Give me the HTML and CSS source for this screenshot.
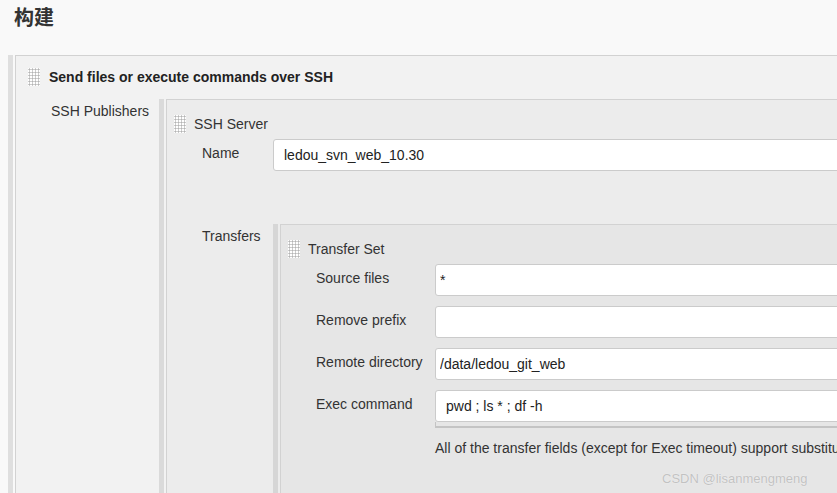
FILE: index.html
```html
<!DOCTYPE html>
<html>
<head>
    <meta charset="utf-8">
    <title>构建</title>
    <link rel="stylesheet" href="styles.css">
</head>
<body>
    <div class="title">构建</div>

    <div class="block lvl1">
        <div class="bar"></div>
        <div class="box">
            <div class="head strong"><span class="grip"></span>Send files or execute commands over SSH</div>
            <div class="row">
                <div class="label">SSH Publishers</div>

                <div class="block lvl2">
                    <div class="bar"></div>
                    <div class="box">
                        <div class="head"><span class="grip"></span>SSH Server</div>
                        <div class="row field">
                            <div class="label">Name</div>
                            <input class="text pad-wide" type="text" value="ledou_svn_web_10.30">
                        </div>
                        <div class="row transfers">
                            <div class="label">Transfers</div>

                            <div class="block lvl3">
                                <div class="bar"></div>
                                <div class="box">
                                    <div class="head"><span class="grip"></span>Transfer Set</div>
                                    <div class="row field">
                                        <div class="label">Source files</div>
                                        <input class="text" type="text" value="*">
                                    </div>
                                    <div class="row field">
                                        <div class="label">Remove prefix</div>
                                        <input class="text" type="text" value="">
                                    </div>
                                    <div class="row field">
                                        <div class="label">Remote directory</div>
                                        <input class="text" type="text" value="/data/ledou_git_web">
                                    </div>
                                    <div class="row field">
                                        <div class="label">Exec command</div>
                                        <div class="area-wrap">
                                            <textarea class="text area" rows="1">pwd ; ls * ; df -h</textarea>
                                            <div class="area-handle"></div>
                                        </div>
                                    </div>
                                    <div class="row help">
                                        <div class="label"></div>
                                        <div class="help-text">All of the transfer fields (except for Exec timeout) support substitution of Jenkins environment variables</div>
                                    </div>
                                </div>
                            </div>

                        </div>
                    </div>
                </div>

            </div>
        </div>
    </div>

    <div class="watermark">CSDN @lisanmengmeng</div>
</body>
</html>
```

FILE: styles.css
```css
body {
    margin: 0;
    height: 493px;
    overflow: hidden;
    background: #f9f9f9;
    font-family: "Liberation Sans", Arial, "Noto Sans CJK SC", sans-serif;
    font-size: 14px;
    color: #333;
    position: relative;
}
.title {
    height: 55px;
    padding-left: 14px;
    line-height: 36px;
    font-size: 20px;
    font-weight: bold;
    color: #333;
}
.block {
    display: flex;
    align-items: stretch;
}
.lvl1 {
    margin-left: 8px;
    width: 1300px;
}
.lvl2, .lvl3 {
    flex: 1;
}
.bar {
    width: 5px;
    margin-right: 2px;
    flex: none;
}
.box {
    flex: 1;
    border-top: 1px solid #d2d2d2;
    border-left: 1px solid #d2d2d2;
    padding-bottom: 40px;
}
.lvl1 > .bar { background: #dfdfdf; }
.lvl1 > .box { background: #f2f2f2; }
.lvl2 > .bar { background: #dadada; }
.lvl2 > .box { background: #ececec; }
.lvl3 > .bar { background: #d6d6d6; }
.lvl3 > .box { background: #e6e6e6; }

.head {
    display: flex;
    align-items: center;
    line-height: 18px;
    padding: 15px 0 6px 7px;
}
.lvl1 .head.strong {
    padding: 12px 0 13px 12px;
    font-weight: bold;
    color: #222;
}
.grip {
    width: 12px;
    height: 18px;
    margin-right: 8px;
    background-color: #fff;
    background-image: radial-gradient(circle at 1.5px 1.5px, #b4b4b4 0.9px, transparent 1.2px);
    background-size: 3px 3px;
    flex: none;
}
.lvl1 .head.strong .grip {
    margin-right: 9px;
}

.row {
    display: flex;
    align-items: flex-start;
}
.label {
    flex: none;
    padding-left: 35px;
    padding-top: 4px;
    line-height: 16px;
    box-sizing: border-box;
}
.lvl1 > .box > .row > .label { width: 143px; }
.lvl2 > .box > .row > .label { width: 106px; }
.lvl3 > .box > .row > .label { width: 154px; }

.row.field {
    margin-bottom: 10px;
}
.row.field > .label {
    padding-top: 6px;
}
.row.transfers {
    margin-top: 53px;
}

.text {
    flex: 1;
    height: 32px;
    box-sizing: border-box;
    border: 1px solid #cbcbcb;
    border-radius: 3px;
    background: #fff;
    padding: 0 4px;
    font-family: "Liberation Sans", Arial, sans-serif;
    font-size: 14px;
    color: #222;
    outline: none;
}
.pad-wide {
    padding-left: 10px;
}
.area-wrap {
    flex: 1;
    display: flex;
    flex-direction: column;
}
.area {
    width: 100%;
    padding: 6px 10px;
    line-height: 18px;
    resize: none;
    overflow: hidden;
    display: block;
}
.area-handle {
    height: 4px;
    border-left: 1px solid #c4c4c4;
    border-bottom: 2px solid #c4c4c4;
}
.row.help {
    margin-top: 12px;
}
.help-text {
    white-space: nowrap;
    line-height: 16px;
}
.watermark {
    position: absolute;
    left: 662px;
    top: 470px;
    font-size: 13px;
    line-height: 18px;
    color: #c2c2c2;
    text-shadow: 0 0 1px #fafafa;
}
```
